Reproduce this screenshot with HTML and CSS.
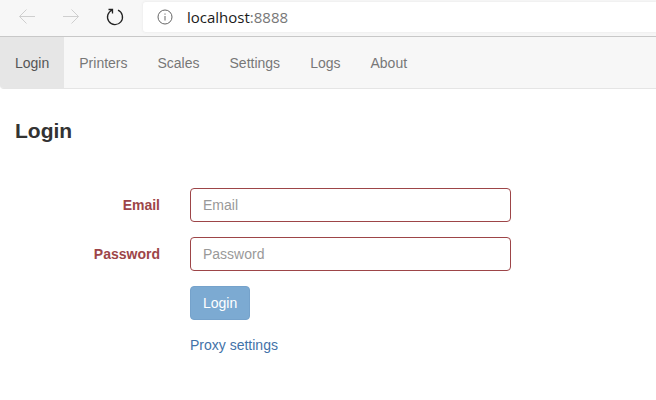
FILE: index.html
```html
<!DOCTYPE html>
<html lang="en">
<head>
<meta charset="utf-8">
<title>Login</title>
<link rel="stylesheet" href="styles.css">
</head>
<body>
<header class="toolbar">
  <div class="toolbar-buttons">
    <button class="tool" type="button" aria-label="Back" disabled>
      <svg width="18" height="18" viewBox="0 0 18 18"><path d="M17 8.500H1.500M8.500 1.500l-7 7 7 7"/></svg>
    </button>
    <button class="tool" type="button" aria-label="Forward" disabled>
      <svg width="18" height="18" viewBox="0 0 18 18"><path d="M1 8.500h15.500M9.500 1.500l7 7-7 7"/></svg>
    </button>
    <button class="tool tool-reload" type="button" aria-label="Reload">
      <svg width="18" height="18" viewBox="0 0 18 18"><path d="M12 2.200A7.500 7.500 0 1 1 6.500 2M2.500 1.500h4V5.500"/></svg>
    </button>
  </div>
  <div class="address">
    <svg class="info" width="16" height="16" viewBox="0 0 16 16"><circle cx="8" cy="8" r="7"/><path d="M8 7v4.500M8 4.500v1.200"/></svg>
    <span class="url">localhost<span class="port">:8888</span></span>
  </div>
</header>
<nav class="navbar">
  <a class="nav-link active" href="#login">Login</a>
  <a class="nav-link" href="#printers">Printers</a>
  <a class="nav-link" href="#scales">Scales</a>
  <a class="nav-link" href="#settings">Settings</a>
  <a class="nav-link" href="#logs">Logs</a>
  <a class="nav-link" href="#about">About</a>
</nav>
<main class="content">
  <h1 class="title">Login</h1>
  <form class="form">
    <label class="label" for="email">Email</label>
    <input class="field" id="email" type="email" placeholder="Email">
    <label class="label" for="password">Password</label>
    <input class="field" id="password" type="password" placeholder="Password">
    <div class="actions">
      <button class="submit" type="submit" disabled>Login</button>
      <a class="link" href="#proxy">Proxy settings</a>
    </div>
  </form>
</main>
</body>
</html>
```
FILE: styles.css
```css
* {
  box-sizing: border-box;
}

body {
  margin: 0;
  background: #fff;
  color: #333;
  font: 14px/20px "Liberation Sans", Arial, sans-serif;
}

.toolbar {
  display: flex;
  height: 37px;
  padding-top: 2px;
  background: #f7f7f7;
  border-bottom: 1px solid #c8c8c8;
}

.toolbar-buttons {
  display: flex;
  gap: 26px;
  padding: 6px 19px 0 18px;
  flex: none;
}

.tool {
  display: flex;
  width: 18px;
  height: 18px;
  padding: 0;
  border: 0;
  background: none;
}

.tool svg,
.info {
  fill: none;
  stroke: #cfcfcf;
  stroke-width: 1;
}

.tool-reload svg {
  stroke: #222;
  stroke-width: 1.3;
}

.address {
  display: flex;
  flex: 1;
  align-items: center;
  gap: 14px;
  height: 30px;
  padding-left: 14px;
  background: #fff;
  border-radius: 3px 0 0 3px;
  box-shadow: 0 0 3px #e4e4e4;
}

.info {
  stroke: #666;
}

.url {
  color: #1b1b1b;
  font: 15px/20px "Open Sans", "Noto Sans", sans-serif;
}

.port {
  color: #777;
}

.navbar {
  display: flex;
  background: #f7f7f7;
  border-bottom: 1px solid #e5e5e5;
  border-radius: 0 0 0 4px;
  overflow: hidden;
}

.nav-link {
  padding: 16px 15px 15px;
  color: #777;
  text-decoration: none;
}

.nav-link.active {
  background: #e6e6e6;
  color: #555;
}

.content {
  padding: 30px 15px;
}

.title {
  margin: 0 0 45px;
  font-size: 21px;
  line-height: 24px;
}

.form {
  display: grid;
  grid-template-columns: 145px minmax(0, 321px);
  gap: 15px 30px;
  align-items: center;
}

.label {
  color: #9d4548;
  font-weight: bold;
  text-align: right;
}

.field {
  width: 100%;
  height: 34px;
  padding: 6px 12px;
  border: 1px solid #9d4548;
  border-radius: 4px;
  background: #fff;
  color: #555;
  font: inherit;
}

.field::placeholder {
  color: #999;
}

.actions {
  display: flex;
  grid-column: 2;
  flex-direction: column;
  align-items: flex-start;
  gap: 15px;
}

.submit {
  height: 34px;
  padding: 6px 12px;
  border: 1px solid #75a2cb;
  border-radius: 4px;
  background: #7caad2;
  color: #fff;
  font: inherit;
}

.link {
  color: #4272a8;
  text-decoration: none;
}
```
